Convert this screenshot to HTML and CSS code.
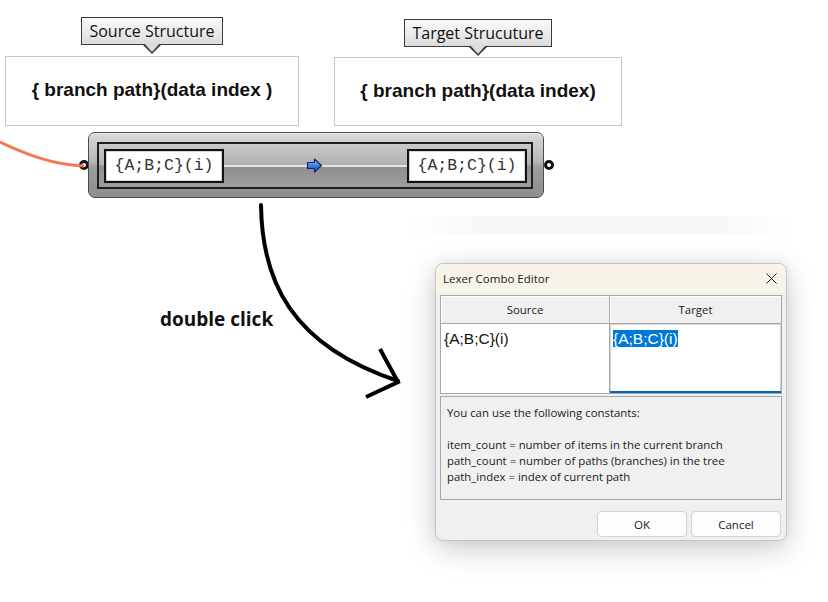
FILE: index.html
```html
<!DOCTYPE html>
<html>
<head>
<meta charset="utf-8">
<link rel="stylesheet" href="styles.css">
</head>
<body>
<svg class="overlay" width="828" height="602" viewBox="0 0 828 602">
  <path d="M0,142 C30,156 55,165 84,166" class="wire"/>
  <path d="M261,205 C262,280 290,345 398,381" class="curve"/>
  <path d="M380,349 L398,382 L366,397" class="head"/>
</svg>

<div class="structs">
  <div class="struct struct-src">
    <div class="callout">Source Structure</div>
    <div class="sbox">{ branch path}(data index )</div>
  </div>
  <div class="struct struct-tgt">
    <div class="callout">Target Strucuture</div>
    <div class="sbox">{ branch path}(data index)</div>
  </div>
</div>

<div class="component">
  <span class="port port-in"></span>
  <div class="comp-inner">
    <div class="field">{A;B;C}(i)</div>
    <div class="track">
      <svg width="17" height="15" viewBox="0 0 17 15">
        <defs>
          <linearGradient id="ag" x1="0" y1="0" x2="0" y2="1">
            <stop offset="0" stop-color="#a8ccff"/>
            <stop offset="0.5" stop-color="#3f80e4"/>
            <stop offset="1" stop-color="#1a4fb0"/>
          </linearGradient>
        </defs>
        <path d="M1.5,4.5 H8.5 V1 L15.5,7.5 L8.5,14 V10.5 H1.5 Z" fill="url(#ag)" stroke="#0d2a66" stroke-width="1.2" stroke-linejoin="round"/>
      </svg>
    </div>
    <div class="field">{A;B;C}(i)</div>
  </div>
  <span class="port port-out"></span>
</div>

<div class="dbl-label">double click</div>
<div class="band"></div>

<div class="dialog">
  <div class="titlebar">
    <span>Lexer Combo Editor</span>
    <svg width="11" height="11" viewBox="0 0 11 11"><path d="M0.5,0.5 L10.5,10.5 M10.5,0.5 L0.5,10.5" stroke="#222" stroke-width="1" fill="none"/></svg>
  </div>
  <div class="dbody">
    <div class="grid">
      <div class="th th-src">Source</div>
      <div class="th">Target</div>
      <div class="td td-src">{A;B;C}(i)</div>
      <div class="td td-tgt"><span class="sel">{A;B;C}(i)</span></div>
    </div>
    <div class="info">
      You can use the following constants:<br><br>
      item_count = number of items in the current branch<br>
      path_count = number of paths (branches) in the tree<br>
      path_index = index of current path
    </div>
    <div class="buttons">
      <button class="btn">OK</button>
      <button class="btn">Cancel</button>
    </div>
  </div>
</div>
</body>
</html>
```

FILE: styles.css
```css
* { box-sizing: border-box; }
html, body { margin: 0; padding: 0; }
body {
  width: 828px;
  height: 602px;
  overflow: hidden;
  background: #fff;
  position: relative;
  font-family: "Open Sans", "Liberation Sans", sans-serif;
  color: #111;
}

.overlay { position: absolute; left: 0; top: 0; }
.wire { fill: none; stroke: #f47a52; stroke-width: 3; }
.curve { fill: none; stroke: #000; stroke-width: 4; stroke-linecap: round; }
.head { fill: none; stroke: #000; stroke-width: 4; stroke-linejoin: miter; }

/* top structure boxes */
.structs {
  position: relative;
  display: flex;
  align-items: flex-start;
  gap: 35px;
  padding: 17px 0 0 5px;
}
.struct { display: flex; flex-direction: column; align-items: center; }
.struct-src { width: 294px; }
.struct-tgt { width: 288px; margin-top: 2px; }
.struct-tgt .callout { margin-bottom: 10px; }
.struct-tgt .sbox { height: 69px; }

.callout {
  position: relative;
  height: 28px;
  padding: 0 7px;
  border: 1px solid #3a3a3a;
  background: linear-gradient(#fbfbfb, #dcdcdc);
  font-size: 16px;
  line-height: 26px;
  white-space: nowrap;
  color: #111;
  margin-bottom: 11px;
}
.callout::before {
  content: "";
  position: absolute;
  left: 50%;
  top: 100%;
  margin-left: -10px;
  border-left: 10px solid transparent;
  border-right: 10px solid transparent;
  border-top: 10px solid #3a3a3a;
}
.callout::after {
  content: "";
  position: absolute;
  left: 50%;
  top: 100%;
  margin-left: -8px;
  margin-top: -1px;
  border-left: 8px solid transparent;
  border-right: 8px solid transparent;
  border-top: 9px solid #dcdcdc;
}

.sbox {
  width: 100%;
  height: 70px;
  border: 1px solid #c8c8c8;
  display: flex;
  align-items: center;
  justify-content: center;
  padding-bottom: 2px;
  font: bold 19px "Liberation Sans", Arial, sans-serif;
  color: #111;
}

/* grasshopper-like component */
.component {
  position: relative;
  margin: 6px 0 0 88px;
  width: 456px;
  height: 66px;
  padding: 9px 10px 8px 8px;
  border: 1px solid #4b4b4b;
  border-radius: 7px;
  background: linear-gradient(#dadada 0%, #b6b6b6 45%, #9c9c9c 55%, #8e8e8e 100%);
  box-shadow: inset 0 1px 0 #f2f2f2;
}
.comp-inner {
  display: flex;
  align-items: center;
  height: 47px;
  padding: 0 4px 0 5px;
  border: 2px solid #1e1e1e;
  background: linear-gradient(#cacaca 0%, #b1b1b1 48%, #8f8f8f 52%, #9d9d9d 100%);
}
.field {
  width: 120px;
  height: 34px;
  flex: none;
  border: 2px solid #111;
  background: #fff;
  box-shadow: inset 0 0 0 1px #d6d6d6;
  font: 16.5px "Liberation Mono", "Courier New", monospace;
  color: #333;
  display: flex;
  align-items: center;
  justify-content: center;
}
.track {
  flex: 1;
  height: 15px;
  position: relative;
  display: flex;
  align-items: center;
  justify-content: center;
}
.track::before {
  content: "";
  position: absolute;
  left: 0;
  right: 0;
  top: 50%;
  height: 2px;
  margin-top: -1px;
  background: #e2e2e2;
}
.track svg { position: relative; margin-right: 3px; }

.port {
  position: absolute;
  top: 50%;
  width: 10px;
  height: 10px;
  margin-top: -5px;
  border: 3px solid #111;
  border-radius: 50%;
  background: #fff;
  z-index: -1;
}
.port-in { left: -10px; }
.port-out { right: -11px; }

.dbl-label {
  position: absolute;
  left: 160px;
  top: 306px;
  font: bold 19px "Open Sans", sans-serif;
  color: #111;
}

.band {
  position: absolute;
  left: 405px;
  top: 216px;
  width: 390px;
  height: 18px;
  background: linear-gradient(to right, rgba(0,0,0,0), rgba(0,0,0,0.03) 20%, rgba(0,0,0,0.03) 80%, rgba(0,0,0,0));
}

/* dialog */
.dialog {
  position: absolute;
  left: 435px;
  top: 263px;
  width: 352px;
  height: 278px;
  border: 1px solid #c4c4c4;
  border-radius: 8px;
  overflow: hidden;
  background: #f0f0f0;
  box-shadow: 0 8px 30px rgba(0,0,0,0.2), 0 0 12px rgba(0,0,0,0.06);
  display: flex;
  flex-direction: column;
  font-size: 11.4px;
  color: #1b1b1b;
}
.titlebar {
  height: 29px;
  flex: none;
  display: flex;
  align-items: center;
  justify-content: space-between;
  padding: 0 9px 0 7px;
  background: #f8f3e9;
  font-size: 11.5px;
}
.dbody {
  flex: 1;
  display: flex;
  flex-direction: column;
  padding: 2px 4px 5px;
}
.grid {
  display: grid;
  grid-template-columns: 169px 1fr;
  grid-template-rows: 28px 69px;
  border: 1px solid #a7a7a7;
  background: #fff;
}
.th {
  background: #f0f0f0;
  border-bottom: 1px solid #a7a7a7;
  box-shadow: inset 1px 1px 0 #fff;
  display: flex;
  align-items: center;
  justify-content: center;
}
.th-src { border-right: 1px solid #a7a7a7; }
.td {
  background: #fff;
  padding: 5px 3px;
  font: 15.5px/19px "Liberation Sans", Arial, sans-serif;
  color: #111;
}
.td-src { border-right: 1px solid #a7a7a7; }
.td-tgt {
  border-bottom: 2px solid #0067c0;
  box-shadow: inset 1px 1px 0 #d4d4d4, inset -1px 0 0 #d4d4d4;
}
.sel { background: #0078d7; color: #fff; }

.info {
  margin-top: 2px;
  height: 104px;
  border: 1px solid #a7a7a7;
  padding: 8px 6px;
  line-height: 16px;
}
.buttons {
  margin-top: 11px;
  display: flex;
  justify-content: flex-end;
  gap: 4px;
  padding-right: 1px;
}
.btn {
  width: 90px;
  height: 26px;
  border: 1px solid #d3d3d3;
  border-radius: 4px;
  background: #fdfdfd;
  font: 11.5px "Open Sans", sans-serif;
  color: #1b1b1b;
  padding: 0;
}
```
